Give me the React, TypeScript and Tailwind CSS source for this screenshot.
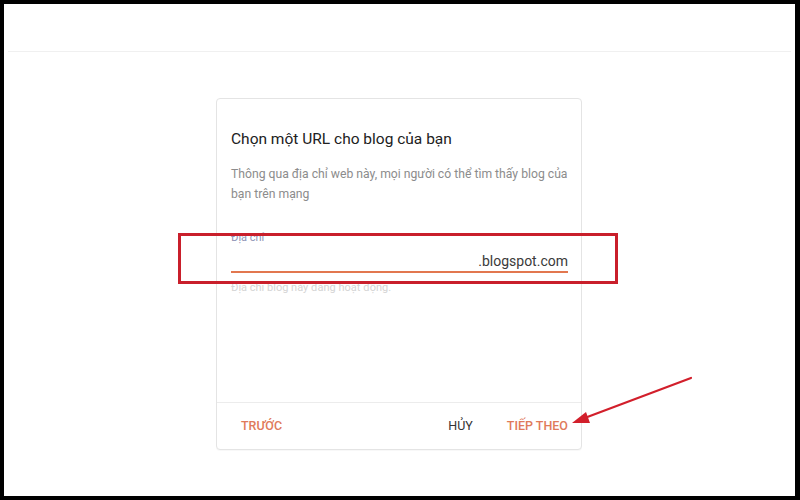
import React from "react";

export default function App() {
  return (
    <div
      className="w-[800px] h-[500px] bg-black pt-[4px] pl-[4px] pr-[5px] pb-[4px]"
      style={{ fontFamily: "Roboto, 'Noto Sans', sans-serif" }}
    >
      <div className="relative w-full h-full bg-white flex flex-col">
        <div className="h-[48px] mx-[4px] border-b border-[#f0f0f0] shrink-0" />
        <div className="flex justify-center pt-[46px] pr-[1px]">
          <div className="w-[366px] h-[352px] border border-[#e4e4e4] rounded-[4px] bg-white flex flex-col shadow-[0_1px_1px_rgba(0,0,0,0.03)]">
            <div className="px-[14px] pt-[28px] flex flex-col">
              <div className="text-[15.5px] leading-[24px] text-[#212121]">
                Chọn một URL cho blog của bạn
              </div>
              <div className="mt-[13px] mr-[-10px] text-[12.2px] leading-[20px] text-[#8c8c8c]">
                Thông qua địa chỉ web này, mọi người có thể tìm thấy blog của bạn trên mạng
              </div>
              <div className="mt-[27px] text-[11px] leading-[14px] text-[#8e93b5]">Địa chỉ</div>
              <div className="mt-[6px] mr-[-1px] flex justify-end text-[14px] leading-[20px] text-[#3a3a3a]">
                .blogspot.com
              </div>
              <div className="mr-[-1px] h-[1.5px] bg-[#e2774f]" />
              <div className="mt-[8px] text-[11px] leading-[14px] text-[#d4d4d4]">
                Địa chỉ blog này đang hoạt động.
              </div>
            </div>
            <div className="mt-auto h-[47px] border-t border-[#ececec] flex items-center pl-[24px] pr-[13px] text-[12.5px] font-medium">
              <span className="text-[#e07a5a]">TRƯỚC</span>
              <span className="ml-auto text-[#333333] font-normal">HỦY</span>
              <span className="ml-[34px] text-[#e07a5a]">TIẾP THEO</span>
            </div>
          </div>
        </div>
        <div className="absolute left-[174px] top-[229px] w-[440px] h-[51px] border-[3px] border-[#c91f2b]" />
        <svg
          className="absolute left-0 top-0 pointer-events-none"
          width="796"
          height="496"
          viewBox="4 4 796 496"
        >
          <line x1="691" y1="378" x2="582" y2="419" stroke="#d21f2b" strokeWidth="2.2" strokeLinecap="round" />
          <polygon points="572,423 586,412 590,423" fill="#d21f2b" />
        </svg>
      </div>
    </div>
  );
}
